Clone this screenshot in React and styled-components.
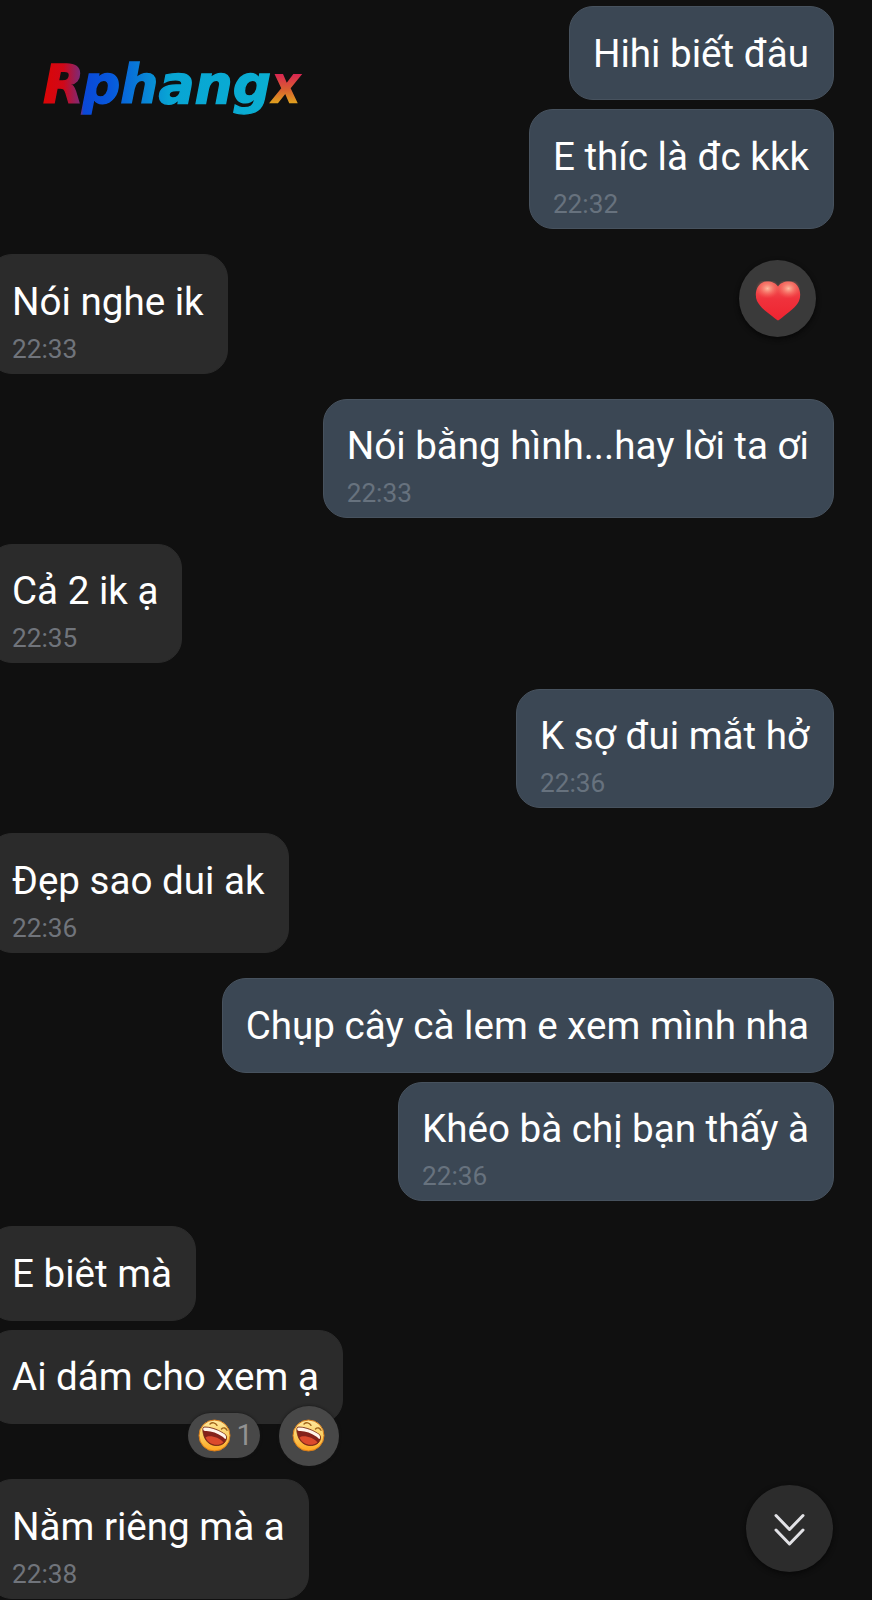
import styled, { createGlobalStyle, css } from 'styled-components'

const GlobalStyle = createGlobalStyle`
    * {
        box-sizing: border-box;
    }

    body {
        margin: 0;
        background: #101010;
        font-family: Roboto, "Noto Sans", sans-serif;
    }
`

const Chat = styled.main`
    position: relative;
    width: 872px;
    height: 1600px;
    padding: 6.2px 38px 0 0;
    overflow: hidden;
    background: #101010;
`

const Logo = styled.svg`
    position: absolute;
    top: 40px;
    left: 20px;
`

const LogoText = styled.text`
    font-family: "DejaVu Sans", sans-serif;
    font-size: 53px;
    font-style: italic;
    font-weight: 700;
    stroke-width: ${({ $thin }) => ($thin ? 0 : 1.4)}px;
    stroke-linejoin: miter;
`

const Row = styled.div`
    display: flex;
    justify-content: ${({ $own }) => ($own ? 'flex-end' : 'space-between')};
    align-items: flex-start;
    margin-bottom: ${({ $gap }) => $gap}px;
`

const Bubble = styled.div`
    position: relative;
    height: ${({ $timed }) => ($timed ? 119.3 : 94.3)}px;
    padding: 23.4px 25px 0 24px;
    border: 1px solid #47525e;
    border-radius: 24px;
    background: #3b4754;
    color: #ffffff;

    ${({ $own }) => !$own && css`
        /* runs off the screen edge */
        margin-left: -12px;
        padding-right: 24px;
        border-color: #2b2b2b;
        background: #2b2b2b;
    `}
`

const Message = styled.p`
    margin: 0 -1px;
    font-size: 38.58px;
    line-height: 46px;
    white-space: nowrap;
`

const Time = styled.time`
    display: block;
    margin: 9px 0 0 -1px;
    font-size: 26.2px;
    line-height: 30px;
    color: ${({ $own }) => ($own ? '#67727e' : '#70747b')};
`

const HeartButton = styled.div`
    display: flex;
    align-items: center;
    justify-content: center;
    width: 77px;
    height: 77px;
    margin: 6px 18px 0 0;
    padding-top: 5px;
    border-radius: 50%;
    background: #3a3a3a;
    box-shadow: 0 2px 5px #070707;
`

const Reactions = styled.div`
    position: absolute;
    top: 75px;
    right: 3px;
    display: flex;
    align-items: center;
    gap: 18.5px;
`

const ReactionCount = styled.div`
    display: flex;
    align-items: center;
    gap: 5px;
    width: 72px;
    height: 45px;
    padding-left: 10px;
    border-radius: 23px;
    background: #484848;
    box-shadow: 0 0 3px #151515;
    font-size: 29px;
    line-height: 45px;
    color: #929292;
`

const ReactionButton = styled.div`
    display: flex;
    align-items: center;
    justify-content: center;
    width: 60px;
    height: 60px;
    border-radius: 50%;
    background: #484848;
    box-shadow: 0 0 3px #151515;
`

const ScrollButton = styled.button`
    position: absolute;
    top: 1485px;
    left: 746px;
    width: 87px;
    height: 87px;
    padding: 0;
    border: 0;
    border-radius: 50%;
    background: #2c2c2c;
    box-shadow: 0 2px 5px #080808;

    svg {
        display: block;
    }
`

const messages = [
    { text: 'Hihi biết đâu', own: true, gap: 9 },
    { text: 'E thíc là đc kkk', time: '22:32', own: true, gap: 25.5 },
    { text: 'Nói nghe ik', time: '22:33', heart: true, gap: 25.5 },
    { text: 'Nói bằng hình...hay lời ta ơi', time: '22:33', own: true, gap: 25.5 },
    { text: 'Cả 2 ik ạ', time: '22:35', gap: 25.5 },
    { text: 'K sợ đui mắt hở', time: '22:36', own: true, gap: 25.5 },
    { text: 'Đẹp sao dui ak', time: '22:36', gap: 25.5 },
    { text: 'Chụp cây cà lem e xem mình nha', own: true, gap: 9 },
    { text: 'Khéo bà chị bạn thấy à', time: '22:36', own: true, gap: 25.5 },
    { text: 'E biêt mà', gap: 9 },
    { text: 'Ai dám cho xem ạ', laughs: 1, gap: 55.5 },
    { text: 'Nằm riêng mà a', time: '22:38', gap: 0 },
]

function Brand() {
    return (
        <Logo width="300" height="90" viewBox="20 40 300 90">
            <defs>
                <linearGradient id="brand" gradientUnits="userSpaceOnUse" x1="43" y1="0" x2="269" y2="0">
                    <stop offset="0" stopColor="#dc0505" />
                    <stop offset="0.09" stopColor="#d00818" />
                    <stop offset="0.165" stopColor="#7c2a78" />
                    <stop offset="0.18" stopColor="#0a48d8" />
                    <stop offset="0.3" stopColor="#0758dc" />
                    <stop offset="0.43" stopColor="#087dd6" />
                    <stop offset="0.56" stopColor="#08a5d4" />
                    <stop offset="1" stopColor="#0aaed2" />
                </linearGradient>
                <linearGradient id="brandEnd" gradientUnits="userSpaceOnUse" x1="0" y1="74" x2="0" y2="103">
                    <stop offset="0" stopColor="#d92552" />
                    <stop offset="0.55" stopColor="#d9612f" />
                    <stop offset="1" stopColor="#e0a01e" />
                </linearGradient>
            </defs>
            <LogoText x="43" y="102.500" fill="url(#brand)" stroke="url(#brand)" textLength="41" lengthAdjust="spacingAndGlyphs">R</LogoText>
            <LogoText x="82" y="102.500" fill="url(#brand)" stroke="url(#brand)" textLength="189" lengthAdjust="spacingAndGlyphs">phang</LogoText>
            <LogoText x="271" y="103" $thin fill="url(#brandEnd)" textLength="30" lengthAdjust="spacingAndGlyphs">x</LogoText>
        </Logo>
    )
}

function Heart() {
    return (
        <svg width="46" height="40" viewBox="0 0 46 40">
            <defs>
                <linearGradient id="heart" x1="0" y1="0" x2="0" y2="1">
                    <stop offset="0" stopColor="#f0605a" />
                    <stop offset="0.45" stopColor="#f0323c" />
                    <stop offset="1" stopColor="#ee2430" />
                </linearGradient>
                <radialGradient id="shine">
                    <stop offset="0" stopColor="#ffcfae" stopOpacity="0.85" />
                    <stop offset="1" stopColor="#ff6a5a" stopOpacity="0" />
                </radialGradient>
            </defs>
            <path d="M23 39.500C22 39 20 37.500 17 35C11 30.500 5 26 2 20C-1.500 11 3 .5 12 .5C17.500 .5 21 2.500 23 5.500C25 2.500 28.500 .5 34 .5C43 .5 47.500 11 44 20C41 26 35 30.500 29 35C26 37.500 24 39 23 39.500Z" fill="url(#heart)" />
            <ellipse cx="12.500" cy="7.500" rx="12" ry="10" fill="url(#shine)" />
            <ellipse cx="33.500" cy="7.500" rx="12" ry="10" fill="url(#shine)" />
        </svg>
    )
}

function Laugh() {
    return (
        <svg width="33" height="33" viewBox="0 0 33 33">
            <defs>
                <linearGradient id="face" x1="0" y1="0" x2="0" y2="1">
                    <stop offset="0" stopColor="#ffe9a0" />
                    <stop offset="0.5" stopColor="#fbcf62" />
                    <stop offset="1" stopColor="#ffa51e" />
                </linearGradient>
            </defs>
            <circle cx="16.500" cy="16.500" r="15.500" fill="url(#face)" stroke="#d97b18" strokeWidth="1" />
            <path d="M12 5C14 3 17.500 3.500 19 6.300M23.500 10C25.500 8 28 8.800 29 11.300" fill="none" stroke="#a0641c" strokeWidth="1.400" strokeLinecap="round" />
            <path d="M6.500 8C4.500 8 4.800 10.500 5 13C6 20 10 25.800 17 26.500C23 27 27.500 24.500 28.500 19.500C29 16.500 27.500 15.500 25 14C19 10 12 8 6.500 8Z" fill="#84221a" stroke="#6f2414" strokeWidth="0.800" />
            <path d="M7.500 18.500C11 15.800 21 18 25.500 23.500C19.500 27.800 11 26 7.500 18.500Z" fill="#dc4a2c" />
            <path d="M6.500 8.500C12 8.500 19 10.300 25 14.300C27.500 15.800 28.500 17 28 19.500C27 20.500 26.500 19.500 25 18C19 13.500 12 11.500 7 12C5 12 4.500 8.500 6.500 8.500Z" fill="#fff5ea" />
        </svg>
    )
}

function ChatMessage({ message }) {
    const { text, time, own, heart, laughs, gap } = message

    return (
        <Row $own={own} $gap={gap}>
            <Bubble $own={own} $timed={Boolean(time)}>
                <Message>{text}</Message>
                {time && <Time $own={own}>{time}</Time>}
                {laughs && (
                    <Reactions>
                        <ReactionCount><Laugh />{laughs}</ReactionCount>
                        <ReactionButton><Laugh /></ReactionButton>
                    </Reactions>
                )}
            </Bubble>
            {heart && <HeartButton><Heart /></HeartButton>}
        </Row>
    )
}

export default function App() {
    return (
        <>
            <GlobalStyle />
            <Chat>
                <Brand />
                {messages.map((message) => (
                    <ChatMessage key={message.text} message={message} />
                ))}
                <ScrollButton aria-label="Scroll down">
                    <svg width="87" height="87" viewBox="0 0 87 87" fill="none" stroke="#e2e2e6" strokeWidth="3" strokeLinecap="round" strokeLinejoin="round">
                        <path d="M30 30.500L43.500 44.500L57 30.500M30 45L43.500 59L57 45" />
                    </svg>
                </ScrollButton>
            </Chat>
        </>
    )
}
